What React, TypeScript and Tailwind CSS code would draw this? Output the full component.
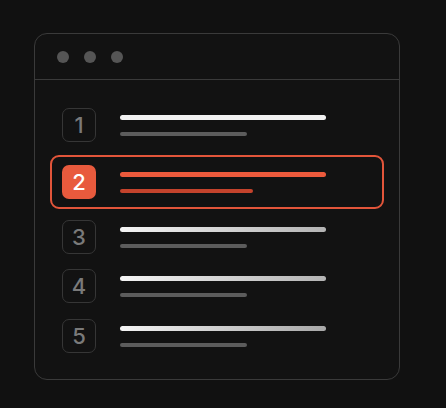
const items = [
  { n: 1, active: false, gap: 'mt-0', top: 'bg-[#f2f2f2]' },
  { n: 2, active: true, gap: 'mt-[11px]', top: '' },
  { n: 3, active: false, gap: 'mt-[9px]', top: 'bg-gradient-to-r from-[#f4f4f4] to-[#b4b4b4]' },
  { n: 4, active: false, gap: 'mt-[11px]', top: 'bg-gradient-to-r from-[#f4f4f4] to-[#b4b4b4]' },
  { n: 5, active: false, gap: 'mt-[12px]', top: 'bg-gradient-to-r from-[#f4f4f4] to-[#a8a8a8]' },
];

const App = () => {
  return (
    <div className="w-[446px] h-[408px] bg-[#111111] pt-[33px] pl-[34px] font-['Inter',sans-serif]">
      <div className="w-[366px] h-[347px] rounded-[13px] border border-[#3a3a3a] bg-[#121212]">
        <div className="h-[46px] flex items-center gap-[15px] pl-[22px] border-b border-[#3a3a3a]">
          <span className="w-[12px] h-[12px] rounded-full bg-[#555555]"></span>
          <span className="w-[12px] h-[12px] rounded-full bg-[#555555]"></span>
          <span className="w-[12px] h-[12px] rounded-full bg-[#555555]"></span>
        </div>

        <div className="flex flex-col px-[15px] pt-[26px]">
          {items.map((it) => (
            <div
              key={it.n}
              className={`${it.gap} flex items-center gap-[24px] px-[10px] border-2 rounded-[9px] ${
                it.active ? 'border-[#e2553a] py-[8px]' : 'border-transparent py-0'
              }`}
            >
              <div
                className={`w-[34px] h-[34px] rounded-[7px] flex items-center justify-center text-[22px] font-medium leading-none ${
                  it.active
                    ? 'bg-[#e85a3d] text-white'
                    : 'border-[1.5px] border-[#363636] text-[#7a7a7a]'
                }`}
              >
                {it.n}
              </div>
              <div className="flex flex-col gap-[12px]">
                <div
                  className={`w-[206px] h-[5px] rounded-full ${
                    it.active ? 'bg-[#ec5a3c]' : it.top
                  }`}
                ></div>
                <div
                  className={`h-[4px] rounded-full ${
                    it.active ? 'w-[133px] bg-[#c4432c]' : 'w-[127px] bg-[#5c5c5c]'
                  }`}
                ></div>
              </div>
            </div>
          ))}
        </div>
      </div>
    </div>
  );
};

export default App;
